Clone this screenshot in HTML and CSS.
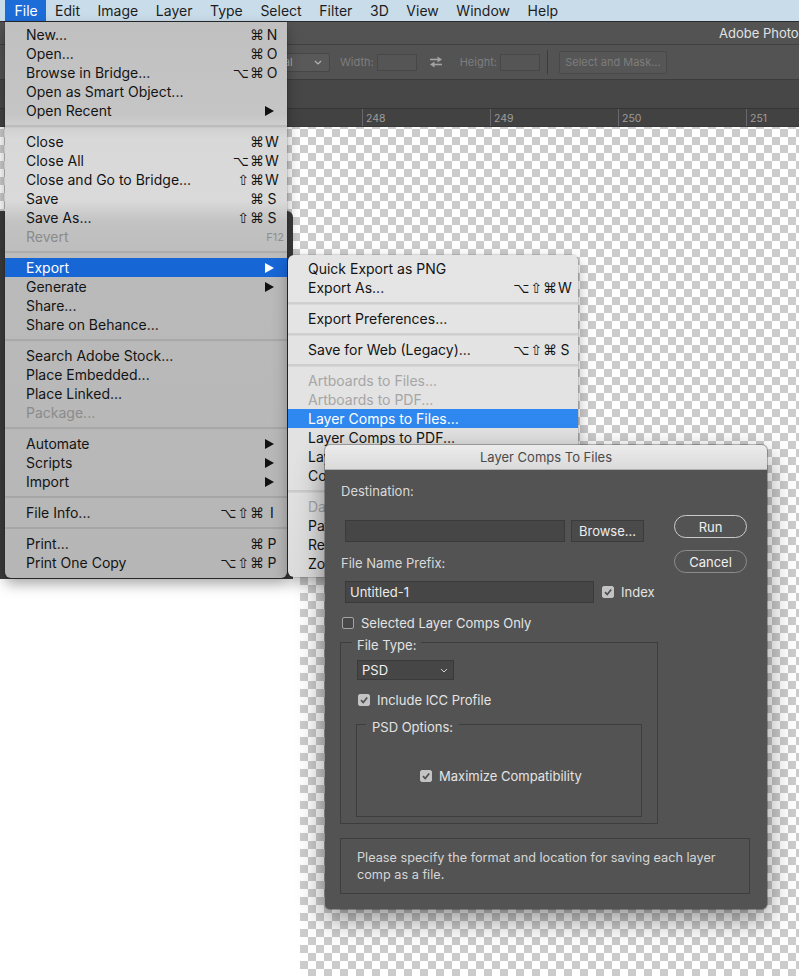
FILE: index.html
```html
<!DOCTYPE html>
<html lang="en">
<head>
<meta charset="utf-8">
<title>Photoshop – Layer Comps To Files</title>
<link rel="stylesheet" href="styles.css">
</head>
<body>
<div class="screen">
  <header class="menubar">
    <span class="mb-item active">File</span>
    <span class="mb-item">Edit</span>
    <span class="mb-item">Image</span>
    <span class="mb-item">Layer</span>
    <span class="mb-item">Type</span>
    <span class="mb-item">Select</span>
    <span class="mb-item">Filter</span>
    <span class="mb-item">3D</span>
    <span class="mb-item">View</span>
    <span class="mb-item">Window</span>
    <span class="mb-item">Help</span>
  </header>

  <div class="titlebar"><span class="app-title">Adobe Photoshop 2020</span></div>

  <div class="optionsbar">
    <span class="ob-select">Normal<svg class="chev" width="8" height="5" viewBox="0 0 8 5"><path d="M1 1l3 3 3-3" fill="none" stroke="#b5b5b5" stroke-width="1.2"/></svg></span>
    <span class="ob-label w-label">Width:</span><span class="ob-input"></span>
    <svg class="swap" width="14" height="12" viewBox="0 0 14 12"><path d="M1 3.5h8" stroke="#a3a3a3" stroke-width="1.6"/><path d="M8.5 0.5l4.5 3-4.5 3z" fill="#a3a3a3"/><path d="M13 8.5h-8" stroke="#a3a3a3" stroke-width="1.6"/><path d="M5.5 5.5l-4.5 3 4.5 3z" fill="#a3a3a3"/></svg>
    <span class="ob-label h-label">Height:</span><span class="ob-input"></span>
    <span class="ob-sep"></span>
    <span class="ob-btn">Select and Mask...</span>
  </div>

  <div class="docstrip"></div>

  <div class="ruler">
    <span class="r-lead"></span>
    <span class="r-seg">248</span>
    <span class="r-seg">249</span>
    <span class="r-seg">250</span>
    <span class="r-seg">251</span>
  </div>

  <div class="canvas">
    <div class="canvas-top"><div class="dark-panel"></div></div>
    <div class="canvas-bottom"><div class="white-block"></div></div>
  </div>

  <nav class="filemenu">
    <div class="mi"><span>New...</span><span class="sc">⌘<b>N</b></span></div>
    <div class="mi"><span>Open...</span><span class="sc">⌘<b>O</b></span></div>
    <div class="mi"><span>Browse in Bridge...</span><span class="sc">⌥⌘<b>O</b></span></div>
    <div class="mi"><span>Open as Smart Object...</span></div>
    <div class="mi"><span>Open Recent</span><i class="arrow"></i></div>
    <div class="sep"></div>
    <div class="mi"><span>Close</span><span class="sc">⌘<b>W</b></span></div>
    <div class="mi"><span>Close All</span><span class="sc">⌥⌘<b>W</b></span></div>
    <div class="mi"><span>Close and Go to Bridge...</span><span class="sc">⇧⌘<b>W</b></span></div>
    <div class="mi"><span>Save</span><span class="sc">⌘<b>S</b></span></div>
    <div class="mi"><span>Save As...</span><span class="sc">⇧⌘<b>S</b></span></div>
    <div class="mi dis"><span>Revert</span><span class="fkey">F12</span></div>
    <div class="sep"></div>
    <div class="mi hl"><span>Export</span><i class="arrow"></i></div>
    <div class="mi"><span>Generate</span><i class="arrow"></i></div>
    <div class="mi"><span>Share...</span></div>
    <div class="mi"><span>Share on Behance...</span></div>
    <div class="sep"></div>
    <div class="mi"><span>Search Adobe Stock...</span></div>
    <div class="mi"><span>Place Embedded...</span></div>
    <div class="mi"><span>Place Linked...</span></div>
    <div class="mi dis"><span>Package...</span></div>
    <div class="sep"></div>
    <div class="mi"><span>Automate</span><i class="arrow"></i></div>
    <div class="mi"><span>Scripts</span><i class="arrow"></i></div>
    <div class="mi"><span>Import</span><i class="arrow"></i></div>
    <div class="sep"></div>
    <div class="mi"><span>File Info...</span><span class="sc">⌥⇧⌘<b>I</b></span></div>
    <div class="sep"></div>
    <div class="mi"><span>Print...</span><span class="sc">⌘<b>P</b></span></div>
    <div class="mi"><span>Print One Copy</span><span class="sc">⌥⇧⌘<b>P</b></span></div>
  </nav>

  <nav class="submenu">
    <div class="mi"><span>Quick Export as PNG</span></div>
    <div class="mi"><span>Export As...</span><span class="sc">⌥⇧⌘<b>W</b></span></div>
    <div class="sep"></div>
    <div class="mi"><span>Export Preferences...</span></div>
    <div class="sep"></div>
    <div class="mi"><span>Save for Web (Legacy)...</span><span class="sc">⌥⇧⌘<b>S</b></span></div>
    <div class="sep"></div>
    <div class="mi dis"><span>Artboards to Files...</span></div>
    <div class="mi dis"><span>Artboards to PDF...</span></div>
    <div class="mi hl"><span>Layer Comps to Files...</span></div>
    <div class="mi"><span>Layer Comps to PDF...</span></div>
    <div class="mi"><span>Layer Comps to WPG...</span></div>
    <div class="mi"><span>Color Lookup Tables...</span></div>
    <div class="sep"></div>
    <div class="mi dis"><span>Data Sets as Files...</span></div>
    <div class="mi"><span>Paths to Illustrator...</span></div>
    <div class="mi"><span>Render Video...</span></div>
    <div class="mi"><span>Zoomify...</span></div>
  </nav>

  <section class="dialog">
    <div class="dlg-title">Layer Comps To Files</div>
    <div class="dlg-body">
      <div class="dlg-top">
        <div class="dlg-main">
          <div class="dlg-lbl">Destination:</div>
          <div class="dest-row">
            <span class="field dest-field"></span>
            <span class="btn-browse">Browse...</span>
          </div>
          <div class="dlg-lbl prefix-lbl">File Name Prefix:</div>
          <div class="prefix-row">
            <span class="field prefix-field">Untitled-1</span>
            <span class="cb on"><svg width="10" height="10" viewBox="0 0 10 10"><path d="M2 5.2l2.2 2.3L8.2 2.4" fill="none" stroke="#4f4f4f" stroke-width="1.7"/></svg></span>
            <span class="cb-lbl">Index</span>
          </div>
          <div class="check-row sel-row">
            <span class="cb"></span>
            <span class="cb-lbl">Selected Layer Comps Only</span>
          </div>
          <fieldset class="group type-group">
            <legend>File Type:</legend>
            <div class="dd">PSD<svg width="8" height="5" viewBox="0 0 8 5"><path d="M1 1l3 3 3-3" fill="none" stroke="#cfcfcf" stroke-width="1"/></svg></div>
            <div class="check-row icc-row">
              <span class="cb on"><svg width="10" height="10" viewBox="0 0 10 10"><path d="M2 5.2l2.2 2.3L8.2 2.4" fill="none" stroke="#4f4f4f" stroke-width="1.7"/></svg></span>
              <span class="cb-lbl">Include ICC Profile</span>
            </div>
            <fieldset class="group psd-group">
              <legend>PSD Options:</legend>
              <div class="check-row max-row">
                <span class="cb on"><svg width="10" height="10" viewBox="0 0 10 10"><path d="M2 5.2l2.2 2.3L8.2 2.4" fill="none" stroke="#4f4f4f" stroke-width="1.7"/></svg></span>
                <span class="cb-lbl">Maximize Compatibility</span>
              </div>
            </fieldset>
          </fieldset>
        </div>
        <div class="dlg-buttons">
          <button class="pill default">Run</button>
          <button class="pill">Cancel</button>
        </div>
      </div>
      <div class="dlg-desc">Please specify the format and location for saving each layer<br>comp as a file.</div>
    </div>
  </section>
</div>
</body>
</html>
```

FILE: styles.css
```css
* { box-sizing: border-box; }
body {
  margin: 0;
  font-family: Inter, "DejaVu Sans", sans-serif;
  background: #fff;
}
.screen {
  position: relative;
  width: 799px;
  height: 976px;
  overflow: hidden;
  display: flex;
  flex-direction: column;
  background: #535353;
}

/* ---------- mac menu bar ---------- */
.menubar {
  height: 22px;
  flex: none;
  display: flex;
  align-items: stretch;
  padding-left: 5px;
  background: #c9dcea;
  border-bottom: 1px solid #2c2c2c;
  font-size: 14px;
  color: #1d1d1d;
}
.mb-item {
  padding: 0 8.8px;
  line-height: 21px;
}
.mb-item.active {
  padding: 0 8.5px 0 9.5px;
  background: #1d6dd8;
  color: #fff;
}

/* ---------- photoshop chrome ---------- */
.titlebar {
  height: 23px;
  flex: none;
  background: #535353;
  border-bottom: 1px solid #404040;
  padding-left: 719px;
  white-space: nowrap;
  overflow: hidden;
}
.app-title {
  font-size: 13px;
  line-height: 22px;
  color: #e2e2e2;
}
.optionsbar {
  height: 35px;
  flex: none;
  display: flex;
  align-items: center;
  background: #535353;
  border-bottom: 1px solid #3c3c3c;
  font-size: 11px;
  color: #7e7e7e;
}
.ob-select {
  margin-left: 240px;
  width: 90px;
  height: 19px;
  display: flex;
  align-items: center;
  justify-content: space-between;
  padding: 0 7px 0 14px;
  background: #595959;
  border: 1px solid #474747;
  border-radius: 2px;
  color: #a9a9a9;
}
.w-label { margin-left: 10px; }
.h-label { margin-left: 17px; }
.ob-input {
  margin-left: 3px;
  width: 40px;
  height: 17px;
  background: #555;
  border: 1px solid #474747;
}
.swap { margin-left: 12px; }
.ob-sep {
  margin-left: 7px;
  width: 1px;
  height: 24px;
  background: #3c3c3c;
}
.ob-btn {
  margin-left: 11px;
  width: 108px;
  height: 23px;
  display: flex;
  align-items: center;
  justify-content: center;
  background: #565656;
  border: 1px solid #484848;
  border-radius: 2px;
  color: #7d7d7d;
}
.docstrip {
  height: 28px;
  flex: none;
  background: #474747;
}
.ruler {
  height: 19px;
  flex: none;
  display: flex;
  background: #424242;
  border-top: 1px solid #363636;
  border-bottom: 1px solid #3a3a3a;
  font-size: 10.5px;
  color: #9d9d9d;
}
.r-lead { width: 362px; flex: none; }
.r-seg {
  width: 128px;
  flex: none;
  border-left: 1px solid #6a6a6a;
  padding: 3px 0 0 3px;
}

/* ---------- canvas ---------- */
.canvas {
  flex: 1;
  display: flex;
  flex-direction: column;
  background-color: #fff;
  background-image:
    linear-gradient(45deg, #cccccc 25%, transparent 25%, transparent 75%, #cccccc 75%),
    linear-gradient(45deg, #cccccc 25%, transparent 25%, transparent 75%, #cccccc 75%);
  background-size: 16px 16px;
  background-position: 4px 2px, 12px 10px;
}
.canvas-top {
  height: 452px;
  flex: none;
  padding-top: 84px;
}
.dark-panel {
  width: 293px;
  height: 100%;
  background: #3b3b3b;
  border-top-right-radius: 6px;
}
.canvas-bottom { flex: 1; display: flex; }
.white-block { width: 300px; background: #fff; }

/* ---------- menus ---------- */
.filemenu, .submenu {
  position: absolute;
  font-size: 14px;
  color: #141414;
}
.filemenu {
  left: 5px;
  top: 22px;
  width: 282px;
  padding: 3px 0 6px;
  border-radius: 0 0 6px 6px;
  background: linear-gradient(180deg, #c0c0c0 0px, #c5c5c5 92px, #d8d8d8 116px, #dadada 178px, #c2c2c2 200px, #bababa 250px, #b6b6b6 100%);
  box-shadow: 0 6px 14px rgba(0,0,0,0.35), 0 0 0 1px rgba(0,0,0,0.08);
  z-index: 2;
}
.submenu {
  left: 288px;
  top: 255px;
  width: 290px;
  padding: 4px 0 4px;
  border-radius: 6px;
  background: linear-gradient(180deg, #e5e5e5 0, #e2e2e2 60%, #dcdcdc 100%);
  box-shadow: 0 6px 16px rgba(0,0,0,0.3), 0 0 0 1px rgba(0,0,0,0.1);
  z-index: 3;
}
.mi {
  height: 19px;
  display: flex;
  align-items: center;
  justify-content: space-between;
  padding: 0 8px 0 21px;
  white-space: nowrap;
}
.submenu .mi { padding: 0 6px 0 20px; }
.mi.dis { color: #8b8b8b; }
.submenu .mi.dis { color: #a6a6a6; }
.mi.hl { background: #1766d6; color: #fff; }
.submenu .mi.hl { background: #2f88ef; }
.sc {
  display: flex;
  align-items: center;
  font-family: "DejaVu Sans", sans-serif;
  font-size: 14px;
  letter-spacing: 1px;
}
.sc b {
  font-family: Inter, sans-serif;
  font-weight: 400;
  font-size: 14px;
  width: 14px;
  text-align: center;
  letter-spacing: 0;
}
.fkey {
  font-size: 11px;
  color: #8e8e8e;
  margin-right: -5px;
}
.arrow {
  width: 0;
  height: 0;
  margin-right: 5px;
  border-top: 5px solid transparent;
  border-bottom: 5px solid transparent;
  border-left: 9px solid #111;
}
.mi.hl .arrow { border-left-color: #fff; }
.sep {
  height: 12px;
  display: flex;
  flex-direction: column;
  justify-content: center;
}
.sep::before {
  content: "";
  height: 2px;
  background: rgba(0,0,0,0.09);
  border-bottom: 1px solid rgba(255,255,255,0.18);
}

/* ---------- dialog ---------- */
.dialog {
  position: absolute;
  left: 325px;
  top: 445px;
  width: 442px;
  height: 464px;
  display: flex;
  flex-direction: column;
  border-radius: 5px;
  overflow: hidden;
  background: #535353;
  box-shadow: 0 10px 28px rgba(0,0,0,0.45), 0 0 0 1px rgba(0,0,0,0.25);
  z-index: 4;
  font-size: 13px;
  color: #d9d9d9;
}
.dlg-title {
  height: 25px;
  flex: none;
  display: flex;
  align-items: center;
  justify-content: center;
  background: linear-gradient(180deg, #ececec, #dadada);
  border-bottom: 1px solid #b0b0b0;
  color: #4b4b4b;
}
.dlg-body {
  flex: 1;
  padding: 13px 17px 0 15px;
  display: flex;
  flex-direction: column;
}
.dlg-top { display: flex; }
.dlg-main {
  width: 318px;
  padding-left: 1px;
}
.dlg-lbl { line-height: 16px; }
.dest-row {
  margin-top: 21px;
  display: flex;
  gap: 6px;
  padding-left: 4px;
}
.field {
  height: 22px;
  display: flex;
  align-items: center;
  padding-left: 4px;
  background: #464646;
  border: 1px solid #3a3a3a;
  color: #ececec;
}
.dest-field { width: 220px; }
.btn-browse {
  width: 73px;
  height: 22px;
  flex: none;
  display: flex;
  align-items: center;
  justify-content: center;
  background: #4a4a4a;
  border: 1px solid #3b3b3b;
  color: #ededed;
}
.prefix-lbl { margin-top: 13px; }
.prefix-row {
  margin-top: 10px;
  padding-left: 4px;
  display: flex;
  align-items: center;
  white-space: nowrap;
}
.prefix-field { width: 249px; flex: none; margin-right: 8px; }
.cb {
  width: 12px;
  height: 12px;
  flex: none;
  display: flex;
  align-items: center;
  justify-content: center;
  border-radius: 2px;
  border: 1px solid #a4a4a4;
  background: #484848;
}
.cb.on { background: #c3c3c3; border-color: #c3c3c3; }
.cb-lbl { margin-left: 7px; color: #e4e4e4; line-height: 16px; }
.check-row { display: flex; align-items: center; white-space: nowrap; }
.sel-row { margin-top: 12px; margin-left: 1px; }

.group {
  margin: 0;
  padding: 0;
  border: 1px solid #3d3d3d;
  min-width: 0;
}
.group legend {
  padding: 6px 5px 0;
  line-height: 16px;
  color: #e2e2e2;
}
.type-group {
  margin-left: -1px;
  width: 318px;
  padding: 0 15px 6px 15px;
}
.type-group > legend { margin-left: -4px; }
.dd {
  margin-top: 7px;
  margin-left: 1px;
  width: 97px;
  height: 20px;
  display: flex;
  align-items: center;
  justify-content: space-between;
  padding: 0 5px 0 4px;
  background: #464646;
  border: 1px solid #3a3a3a;
  color: #f0f0f0;
}
.icc-row { margin-top: 12px; margin-left: 2px; }
.psd-group {
  margin-top: 5px;
  padding: 0 0 32px;
}
.psd-group > legend { margin-left: 9px; padding: 6px 6px 0; }
.max-row {
  margin-top: 33px;
  margin-left: 63px;
}

.dlg-buttons {
  margin-left: 16px;
  padding-top: 32px;
  display: flex;
  flex-direction: column;
  gap: 12px;
}
.pill {
  width: 73px;
  height: 23px;
  padding: 0;
  border-radius: 12px;
  border: 1px solid #8c8c8c;
  background: transparent;
  font: inherit;
  color: #f0f0f0;
}
.pill.default { border: 1.5px solid #cbcbcb; }

.dlg-desc {
  margin-top: 14px;
  height: 56px;
  padding: 10px 16px 0;
  border: 1px solid #3d3d3d;
  font-size: 12.7px;
  line-height: 17px;
  color: #d6d6d6;
}
```
